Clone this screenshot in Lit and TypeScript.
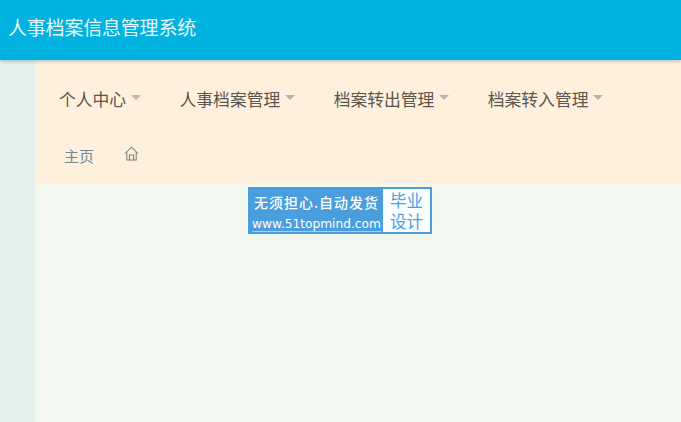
import { LitElement, html, css } from 'lit';
import { customElement } from 'lit/decorators.js';

const MENUS = ['个人中心', '人事档案管理', '档案转出管理', '档案转入管理'];

@customElement('app-root')
export class AppRoot extends LitElement {
  static styles = css`
    :host {
      display: block;
      width: 681px;
      height: 422px;
      overflow: hidden;
      font-family: "Liberation Sans", "Noto Sans CJK SC", sans-serif;
    }

    .page {
      display: flex;
      flex-direction: column;
      height: 100%;
    }

    .header {
      flex: 0 0 60px;
      display: flex;
      align-items: center;
      padding: 0 0 7px 8px;
      box-sizing: border-box;
      background: #00b2e0;
      color: #e6f8fb;
      font-size: 19px;
      letter-spacing: -0.2px;
      box-shadow: 0 1px 4px rgba(0, 80, 120, 0.35);
      position: relative;
      z-index: 2;
    }

    .body {
      flex: 1;
      display: flex;
      min-height: 0;
    }

    .side {
      flex: 0 0 35px;
      background: #e4f1ea;
    }

    .main {
      flex: 1;
      background: #f2f7ef;
    }

    .nav {
      height: 66px;
      display: flex;
      align-items: center;
      padding: 12px 0 0 24px;
      box-sizing: border-box;
      background: #fef0dc;
      border-bottom: 1px solid #f6ebdc;
    }

    .nav-item {
      display: flex;
      align-items: center;
      margin-right: 38.4px;
      color: #5a554e;
      font-size: 16.8px;
    }

    .caret {
      width: 0;
      height: 0;
      margin: 0 0 2px 5px;
      border-left: 5px solid transparent;
      border-right: 5px solid transparent;
      border-top: 5px solid #bdb4aa;
    }

    .crumbs {
      height: 58px;
      display: flex;
      align-items: center;
      padding: 0 0 0 29px;
      box-sizing: border-box;
      background: #fef0dc;
      color: #6f8a96;
      font-size: 15px;
    }

    .crumbs svg {
      width: 15px;
      height: 15px;
      margin: 0 0 4px 30px;
      color: #6f8087;
    }

    .banner {
      display: flex;
      width: 184px;
      height: 47px;
      box-sizing: border-box;
      margin: 3px 0 0 213px;
      background: #4a9ede;
      border: 2px solid #4a9ede;
      color: #fff;
    }

    .banner-left {
      flex: 1;
      display: flex;
      flex-direction: column;
      align-items: center;
      justify-content: space-between;
      padding: 3px 0 0;
    }

    .slogan {
      font-family: "Noto Sans CJK SC", sans-serif;
      font-size: 14px;
      line-height: 20px;
      font-weight: 500;
      letter-spacing: 1px;
      white-space: nowrap;
    }

    .site {
      font-family: "DejaVu Sans", sans-serif;
      font-size: 12.2px;
      line-height: 14px;
      font-weight: 500;
      border-bottom: 1px solid #a8d0f0;
      white-space: nowrap;
    }

    .banner-right {
      flex: 0 0 47px;
      background: #fafdfe;
      color: #4a9ede;
      font-size: 16.5px;
      line-height: 20.5px;
      text-align: center;
      padding-top: 2px;
      box-sizing: border-box;
    }
  `;

  render() {
    return html`
      <div class="page">
        <div class="header">人事档案信息管理系统</div>
        <div class="body">
          <div class="side"></div>
          <div class="main">
            <div class="nav">
              ${MENUS.map(
                (m) => html`<div class="nav-item">${m}<span class="caret"></span></div>`
              )}
            </div>
            <div class="crumbs">
              <span>主页</span>
              <svg viewBox="0 0 16 16" fill="none" stroke="currentColor" stroke-width="1.1">
                <path d="M1 8 8 1.2 15 8" />
                <path d="M3 6.5V15h10V6.5" />
                <path d="M5.8 15V9.5h4.4V15" />
              </svg>
            </div>
            <div class="banner">
              <div class="banner-left">
                <div class="slogan">无须担心.自动发货</div>
                <div class="site">www.51topmind.com</div>
              </div>
              <div class="banner-right">毕业<br />设计</div>
            </div>
          </div>
        </div>
      </div>
    `;
  }
}
